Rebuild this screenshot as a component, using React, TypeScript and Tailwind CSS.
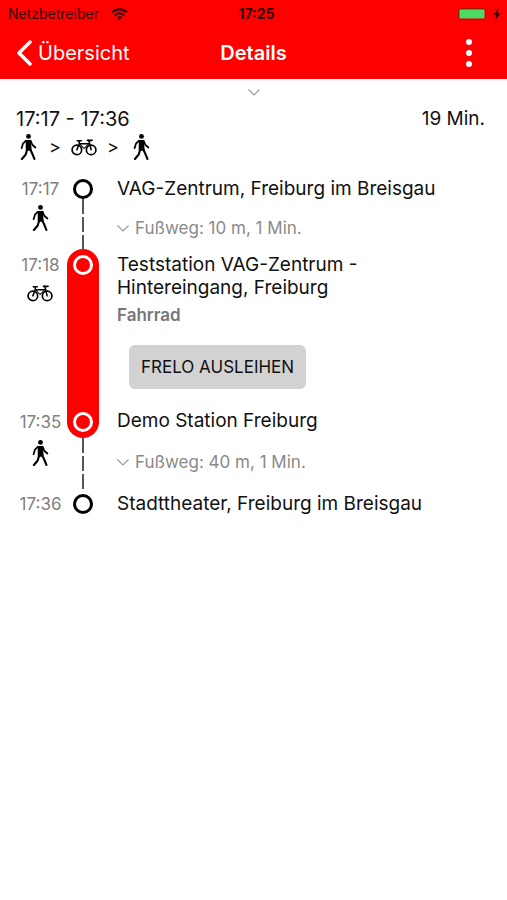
import { ReactNode } from 'react';

const WalkIcon = ({ className = '' }: { className?: string }) => (
  <svg viewBox="0 0 48 75" className={`h-[26px] w-[17px] ${className}`} fill="none" stroke="black" strokeLinecap="round" strokeLinejoin="round" aria-hidden="true">
    <circle cx="24" cy="7" r="7" fill="black" stroke="none" />
    <path d="M18 19h11l2 27H18z" fill="black" strokeWidth="4" />
    <path d="M17 19 8 28 4 41M30 19l5 12 9 8" strokeWidth="5" />
    <path d="M20 45l-4 14L5 72M29 44l6 13 6 15" strokeWidth="6" />
  </svg>
);

const BikeIcon = () => (
  <svg viewBox="0 0 76 50" className="h-[17px] w-[26px]" fill="none" stroke="black" strokeLinecap="round" strokeLinejoin="round" aria-hidden="true">
    <circle cx="17" cy="32" r="14" strokeWidth="5" />
    <circle cx="59" cy="32" r="14" strokeWidth="5" />
    <path d="M17 32 24 14h28M59 32 52 3M48 4h14M18 5h12M24 5v9" strokeWidth="4.5" />
    <path d="M26 15l12 13 14-14" strokeWidth="3" />
  </svg>
);

const ChevronDown = () => (
  <svg viewBox="0 0 12 7" className="h-[7px] w-3" fill="none" stroke="#999" strokeWidth="1.2" aria-hidden="true">
    <path d="M.5.5 6 6l5.5-5.5" />
  </svg>
);

const StopDot = ({ light = false }: { light?: boolean }) => (
  <span className={`size-5 shrink-0 rounded-full border-[3px] ${light ? 'border-white' : 'border-black bg-white'}`} />
);

const DashedLine = () => (
  <span className="w-[2px] flex-1 bg-[repeating-linear-gradient(to_bottom,#555_0_15px,transparent_15px_18px)]" />
);

interface LegProps {
  left: ReactNode;
  rail: ReactNode;
  children: ReactNode;
}

const Leg = ({ left, rail, children }: LegProps) => (
  <li className="flex">
    <div className="flex w-[67px] shrink-0 flex-col items-center pl-3.5 text-[17px] leading-6 text-[#808080]">{left}</div>
    <div className="flex w-8 shrink-0 flex-col items-center">{rail}</div>
    <div className="flex min-w-0 flex-1 flex-col items-start pl-[18px] text-[19px] leading-[23px]">{children}</div>
  </li>
);

const Footpath = ({ children }: { children: ReactNode }) => (
  <button type="button" className="flex items-center gap-1.5 text-[17px] leading-6 text-[#8a8a8a]">
    <ChevronDown />
    {children}
  </button>
);

export default function App() {
  return (
    <div className="min-h-screen bg-white font-['Inter',sans-serif] text-[#111]">
      <header className="bg-[#ff0000]">
        {/* Status bar */}
        <div className="grid h-[26px] grid-cols-3 items-center pt-0.5 pr-1.5 pl-2 text-sm text-[#300]">
          <div className="flex items-center gap-3">
            <span>Netzbetreiber</span>
            <svg viewBox="0 0 18 13" className="h-3 w-[17px]" fill="none" stroke="#300" strokeWidth="2.4" aria-hidden="true">
              <path d="M1 4.6c4.6-4.2 11.4-4.2 16 0M3.9 7.8c3-2.7 7.2-2.7 10.2 0" />
              <path d="M6.2 10c1.7-1.4 3.9-1.4 5.6 0L9 13z" fill="#300" stroke="none" />
            </svg>
          </div>
          <span className="pl-1 text-center font-bold">17:25</span>
          <div className="flex items-center justify-end gap-1">
            <svg viewBox="0 0 31 12" className="h-3 w-[31px]" aria-hidden="true">
              <rect x=".5" y=".5" width="27" height="11" rx="2.5" fill="none" stroke="#a01800" />
              <rect x="1.5" y="1.5" width="25" height="9" rx="1" fill="#4cd964" />
              <path d="M29 4c1.8.5 1.8 3.5 0 4z" fill="#a01800" />
            </svg>
            <svg viewBox="0 0 8 12" className="h-3 w-2" fill="#200" aria-hidden="true">
              <path d="M5.5 0 .5 6.800h2.800L2.300 12 7.500 5H4.700z" />
            </svg>
          </div>
        </div>
        {/* Navigation bar */}
        <div className="grid h-[53px] grid-cols-[1fr_auto_1fr] items-center px-4 text-xl text-white">
          <button type="button" className="flex items-center gap-1.5">
            <svg viewBox="0 0 16 26" className="h-[26px] w-4" fill="none" stroke="white" strokeWidth="3.5" strokeLinecap="round" strokeLinejoin="round" aria-hidden="true">
              <path d="M14 2 3 13l11 11" />
            </svg>
            Übersicht
          </button>
          <h1 className="text-center font-semibold">Details</h1>
          <button type="button" aria-label="Mehr" className="mr-2.5 flex w-6 flex-col items-center gap-[5px] justify-self-end">
            <span className="size-1.5 rounded-full bg-white" />
            <span className="size-1.5 rounded-full bg-white" />
            <span className="size-1.5 rounded-full bg-white" />
          </button>
        </div>
      </header>

      <main>
        <button type="button" aria-label="Ausklappen" className="flex h-[26px] w-full items-center justify-center">
          <ChevronDown />
        </button>

        <section className="pr-[22px] pl-4">
          <div className="flex items-center justify-between leading-7">
            <span className="text-xl leading-7">17:17 - 17:36</span>
            <span className="text-[19px]">19 Min.</span>
          </div>
          <div className="flex h-7 items-center gap-2.5 pl-1 text-lg">
            <WalkIcon className="mr-0.5" />
            <span>&gt;</span>
            <BikeIcon />
            <span>&gt;</span>
            <WalkIcon className="ml-1" />
          </div>
        </section>

        <ol className="pt-4 pr-4">
          <Leg
            left={<><time>17:17</time><WalkIcon className="mt-1" /></>}
            rail={<div className="flex flex-1 flex-col items-center pt-0.5"><StopDot /><DashedLine /></div>}
          >
            <h2>VAG-Zentrum, Freiburg im Breisgau</h2>
            <div className="pt-4 pb-[9px]"><Footpath>Fußweg: 10 m, 1 Min.</Footpath></div>
          </Leg>
          <Leg
            left={
              <div className="flex flex-1 flex-col items-center pt-1">
                <time className="mb-2">17:18</time>
                <BikeIcon />
                <time className="mt-auto mb-1">17:35</time>
              </div>
            }
            rail={
              <div className="flex w-full flex-1 flex-col items-center justify-between rounded-full bg-[#ff0000] py-1.5">
                <StopDot light />
                <StopDot light />
              </div>
            }
          >
            <h2 className="max-w-[260px] pt-1">Teststation VAG-Zentrum - Hintereingang, Freiburg</h2>
            <p className="pt-1 text-[17px] leading-6 font-semibold text-[#777]">Fahrrad</p>
            <button type="button" className="mt-[18px] mb-5 ml-3 h-11 rounded-md bg-[#d2d2d2] px-3 text-[17px]">FRELO AUSLEIHEN</button>
            <h2 className="pb-1.5">Demo Station Freiburg</h2>
          </Leg>
          <Leg left={<WalkIcon className="mt-0.5" />} rail={<DashedLine />}>
            <div className="pt-3 pb-[18px]"><Footpath>Fußweg: 40 m, 1 Min.</Footpath></div>
          </Leg>
          <Leg left={<time>17:36</time>} rail={<div className="flex pt-0.5"><StopDot /></div>}>
            <h2>Stadttheater, Freiburg im Breisgau</h2>
          </Leg>
        </ol>
      </main>
    </div>
  );
}
